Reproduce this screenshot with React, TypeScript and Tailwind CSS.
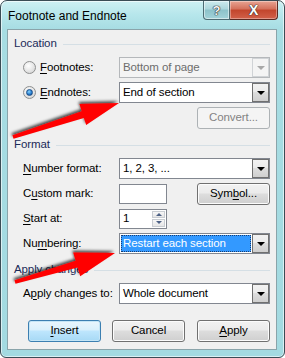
import React from "react";

function U({ c }: { c: string }) {
  return <span className="underline decoration-1 underline-offset-[2px]">{c}</span>;
}

function Header({ label }: { label: React.ReactNode }) {
  return (
    <div className="flex items-center h-[14px] pl-[6px] pr-[6px]">
      <span className="text-[#1b2a58] leading-none whitespace-nowrap">{label}</span>
      <div className="flex-1 h-px bg-[#d5dfe5] ml-[6px]" />
    </div>
  );
}

function Arrow({ disabled }: { disabled?: boolean }) {
  return (
    <div
      className={`w-[17px] h-full flex items-center justify-center border ${
        disabled
          ? "border-[#d0d3d6] bg-[#f4f4f4]"
          : "border-[#707070] bg-[linear-gradient(#f2f2f2,#ebebeb_45%,#dddddd_50%,#cfcfcf)]"
      }`}
    >
      <div
        className={`w-0 h-0 border-l-[4px] border-r-[4px] border-t-[4px] border-l-transparent border-r-transparent ${
          disabled ? "border-t-[#a8a8a8]" : "border-t-black"
        }`}
      />
    </div>
  );
}

function Combo({
  text,
  disabled,
  selected,
}: {
  text: string;
  disabled?: boolean;
  selected?: boolean;
}) {
  return (
    <div
      className={`flex h-[21px] w-[151px] border ${
        disabled
          ? "border-[#b5b8bb] bg-[#f4f4f4] text-[#6d6d6d]"
          : "border-[#828790] bg-white text-black"
      }`}
    >
      <div className="flex-1 flex items-center p-[1px] min-w-0">
        {selected ? (
          <div className="h-full w-full flex items-center bg-[#3399ff] text-white pl-[2px] outline-1 outline-dotted outline-[#1a3d6e] -outline-offset-1 whitespace-nowrap">
            {text}
          </div>
        ) : (
          <span className="pl-[2px] whitespace-nowrap">{text}</span>
        )}
      </div>
      <Arrow disabled={disabled} />
    </div>
  );
}

function Button({
  children,
  w,
  kind,
}: {
  children: React.ReactNode;
  w: string;
  kind?: "default" | "disabled";
}) {
  const base =
    kind === "disabled"
      ? "border-[#adb2b5] bg-[#f4f4f4] text-[#838383]"
      : kind === "default"
      ? "border-[#3c7fb1] bg-[linear-gradient(#eaf6fd,#d9f0fc_45%,#bee6fd_50%,#a7d9f5)] shadow-[inset_0_0_0_1px_#c4e5f6] text-black"
      : "border-[#707070] bg-[linear-gradient(#f2f2f2,#ebebeb_45%,#dddddd_50%,#cfcfcf)] shadow-[inset_0_0_0_1px_#fcfcfc] text-black";
  return (
    <div
      className={`${w} h-[22px] flex items-center justify-center rounded-[3px] border whitespace-nowrap ${base}`}
    >
      {children}
    </div>
  );
}

function Radio({ checked }: { checked?: boolean }) {
  return (
    <div className="w-[13px] h-[13px] rounded-full border border-[#8e8f8f] bg-[radial-gradient(circle_at_40%_35%,#ffffff,#e2e2e2_60%,#c8c8c8)] flex items-center justify-center">
      {checked && (
        <div className="w-[7px] h-[7px] rounded-full bg-[radial-gradient(circle_at_40%_35%,#8ad6ff,#2a7fd0_55%,#0d3f7d)] border border-[#1b4f89]" />
      )}
    </div>
  );
}

export default function App() {
  return (
    <div className="font-['Liberation_Sans',Arial,sans-serif] text-[11.5px] tracking-[-0.1px] text-black">
      <div className="relative w-[285px] h-[358px] rounded-t-[7px] rounded-b-[6px] border border-[#3a4c55] bg-[linear-gradient(180deg,#cdf0f3_0px,#b6e6eb_14px,#a7dde3_28px,#a3dae1_100%)] overflow-hidden shadow-[inset_0_0_0_1px_rgba(255,255,255,0.6)]">
        {/* Title bar */}
        <div className="flex h-[28px] items-start">
          <div className="flex-1 h-full flex items-center pl-[7px] pt-[1px] text-[12px] tracking-normal text-[#000] whitespace-nowrap">
            Footnote and Endnote
          </div>
          <div className="flex mr-[6px]">
            <div className="w-[27px] h-[19px] rounded-bl-[4px] border border-t-0 border-[#4d6b73] bg-[linear-gradient(#cdeaee,#acd6dc_45%,#8cc2ca_50%,#a3d3da)] flex items-center justify-center shadow-[inset_0_0_0_1px_rgba(255,255,255,0.5)]">
              <span className="font-bold text-[13px] text-[#f4f4f4] leading-none [text-shadow:0_0_1px_#222,0_0_1px_#222,0_0_1px_#222]">?</span>
            </div>
            <div className="w-[48px] h-[19px] rounded-br-[4px] border border-l-0 border-t-0 border-[#5a2a22] bg-[linear-gradient(#e8a493,#d4705a_45%,#c2452c_50%,#d2614a)] flex items-center justify-center shadow-[inset_0_0_0_1px_rgba(255,255,255,0.35)]">
              <span className="font-bold text-[14px] text-white leading-none [text-shadow:0_0_1px_#333,0_0_1px_#333,0_0_1px_#333]">X</span>
            </div>
          </div>
        </div>

        {/* Client area */}
        <div className="ml-[6px] w-[270px] h-[321px] border border-[#8aa4aa] bg-[#f0f0f0] pt-[7px]">
          <Header label="Location" />

          <div className="flex items-center h-[21px] mt-[6px] pl-[15px]">
            <div className="w-[96px] flex items-center whitespace-nowrap">
              <Radio />
              <span className="ml-[4px]">
                <U c="F" />ootnotes:
              </span>
            </div>
            <Combo text="Bottom of page" disabled />
          </div>

          <div className="flex items-center h-[21px] mt-[4px] pl-[15px]">
            <div className="w-[96px] flex items-center whitespace-nowrap">
              <Radio checked />
              <span className="ml-[4px]">
                <U c="E" />ndnotes:
              </span>
            </div>
            <Combo text="End of section" />
          </div>

          <div className="flex h-[21px] mt-[4px] pl-[189px]">
            <Button w="w-[73px]" kind="disabled">
              Convert...
            </Button>
          </div>

          <div className="mt-[10px]">
            <Header label="Format" />
          </div>

          <div className="flex items-center h-[21px] mt-[6px] pl-[15px]">
            <div className="w-[96px] whitespace-nowrap">
              <U c="N" />umber format:
            </div>
            <Combo text="1, 2, 3, ..." />
          </div>

          <div className="flex items-center h-[21px] mt-[4px] pl-[15px]">
            <div className="w-[96px] whitespace-nowrap">
              C<U c="u" />stom mark:
            </div>
            <div className="w-[48px] h-[20px] border border-[#828790] bg-white" />
            <div className="ml-[30px]">
              <Button w="w-[73px]">
                Sym<U c="b" />ol...
              </Button>
            </div>
          </div>

          <div className="flex items-center h-[21px] mt-[4px] pl-[15px]">
            <div className="w-[96px] whitespace-nowrap">
              <U c="S" />tart at:
            </div>
            <div className="w-[48px] h-[20px] border border-[#828790] bg-white flex">
              <div className="flex-1 pl-[3px] flex items-center">1</div>
              <div className="w-[15px] flex flex-col p-[1px] gap-[1px]">
                <div className="flex-1 border border-[#c9cdd2] bg-[linear-gradient(#f7f7f7,#e6e6e6)] flex items-center justify-center">
                  <div className="w-0 h-0 border-l-[3px] border-r-[3px] border-b-[3px] border-l-transparent border-r-transparent border-b-[#4d6185]" />
                </div>
                <div className="flex-1 border border-[#c9cdd2] bg-[linear-gradient(#f7f7f7,#e6e6e6)] flex items-center justify-center">
                  <div className="w-0 h-0 border-l-[3px] border-r-[3px] border-t-[3px] border-l-transparent border-r-transparent border-t-[#4d6185]" />
                </div>
              </div>
            </div>
          </div>

          <div className="flex items-center h-[21px] mt-[4px] pl-[15px]">
            <div className="w-[96px] whitespace-nowrap">
              Nu<U c="m" />bering:
            </div>
            <Combo text="Restart each section" selected />
          </div>

          <div className="mt-[9px]">
            <Header label="Apply changes" />
          </div>

          <div className="flex items-center h-[21px] mt-[6px] pl-[15px]">
            <div className="w-[96px] whitespace-nowrap">
              A<U c="p" />ply changes to:
            </div>
            <Combo text="Whole document" />
          </div>

          <div className="flex mt-[16px] pl-[20px]">
            <Button w="w-[73px]" kind="default">
              <U c="I" />nsert
            </Button>
            <div className="ml-[11px]">
              <Button w="w-[73px]">Cancel</Button>
            </div>
            <div className="ml-[12px]">
              <Button w="w-[73px]">
                <U c="A" />pply
              </Button>
            </div>
          </div>
        </div>

        {/* Red annotation arrows */}
        <svg
          className="absolute left-[-1px] top-[-1px] pointer-events-none"
          width="285"
          height="358"
          viewBox="0 0 285 358"
        >
          <defs>
            <filter id="sh" x="-20%" y="-50%" width="140%" height="200%">
              <feDropShadow dx="-1" dy="-2" stdDeviation="1.6" floodColor="#000" floodOpacity="0.7" />
            </filter>
          </defs>
          <polygon
            filter="url(#sh)"
            fill="#ff0000"
            points="12.45,135.29 81.75,111.26 79.46,104.12 119,103 86.18,125.06 83.89,117.92 13.55,138.71"
          />
          <polygon
            filter="url(#sh)"
            fill="#ff0000"
            points="14.5,280.27 75.62,260.8 73.2,252.5 115,253 80.2,276.2 77.58,267.52 15.5,283.73"
          />
        </svg>
      </div>
    </div>
  );
}
